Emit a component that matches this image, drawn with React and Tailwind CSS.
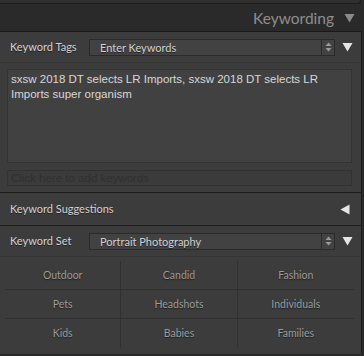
import React from "react";

const Spinner = () => (
  <div className="w-[13px] h-full border-l border-[#2a2a2a] flex items-center justify-center">
    <svg width="7" height="10" viewBox="0 0 7 10">
      <path d="M3.5 0.5 L6.5 4 H0.5 Z" fill="#9a9a9a" />
      <path d="M3.5 9.5 L6.5 6 H0.5 Z" fill="#9a9a9a" />
    </svg>
  </div>
);

const DownTri = ({ color = "#e6e6e6" }) => (
  <svg width="11" height="10" viewBox="0 0 11 10">
    <path d="M0.5 1 H10.5 L5.5 9.5 Z" fill={color} />
  </svg>
);

const Dropdown = ({ text }) => (
  <div className="w-[246px] h-[17px] bg-[#424242] border border-[#2a2a2a] flex items-stretch">
    <div className="flex-1 pl-[10px] flex items-center text-[11px] text-[#d2d2d2] leading-none pt-[1px] [text-shadow:0_1px_0_#222]">
      {text}
    </div>
    <Spinner />
  </div>
);

const cells = [
  "Outdoor", "Candid", "Fashion",
  "Pets", "Headshots", "Individuals",
  "Kids", "Babies", "Families",
];

export default function App() {
  return (
    <div className="w-[364px] h-[356px] bg-[#292929] overflow-hidden font-['Lato','Open_Sans',sans-serif]">
      <div className="h-[4px] w-[361px] bg-[#303030] border-r border-b border-[#1c1c1c] rounded-br-[3px]" />
      <div className="h-[27px] flex items-center justify-end pr-[9px] bg-[#2a2a2a]">
        <span className="text-[15.5px] text-[#8e8e8e] leading-none mr-[10px] mt-[2px]">Keywording</span>
        <DownTri color="#8a8a8a" />
      </div>
      <div className="w-[362px] bg-[#3c3c3c] border-t border-r border-[#1a1a1a]">
        {/* Keyword Tags row */}
        <div className="h-[31px] flex items-center pl-[10px] border-b border-[#353535]">
          <span className="w-[79px] text-[11px] text-[#d4d4d4] pt-[1px] [text-shadow:0_1px_0_#222]">Keyword Tags</span>
          <Dropdown text="Enter Keywords" />
          <div className="ml-[7px]"><DownTri /></div>
        </div>
        <div className="pt-[6px] pb-[6px] pl-[7px] pr-[9px] border-b border-[#1c1c1c]">
          <div className="h-[94px] bg-[#414141] border border-[#333333] px-[3px] pt-[2px] text-[11.5px] leading-[15px] text-[#d8d8d8] font-['Liberation_Sans',sans-serif]">
            sxsw 2018 DT selects LR Imports, sxsw 2018 DT selects LR Imports super organism
          </div>
          <div className="mt-[7px] h-[16px] bg-[#3b3b3b] border border-[#323232] px-[3px] text-[11.5px] leading-[14px] text-[#303030] font-['Liberation_Sans',sans-serif]">
            Click here to add keywords
          </div>
        </div>
        {/* Keyword Suggestions */}
        <div className="h-[33px] flex items-center pl-[10px] pr-[11px] justify-between border-b border-[#1c1c1c]">
          <span className="text-[11px] text-[#d4d4d4] pt-[1px] [text-shadow:0_1px_0_#222]">Keyword Suggestions</span>
          <svg width="10" height="11" viewBox="0 0 10 11">
            <path d="M9.5 0.5 V10.5 L0.5 5.5 Z" fill="#e6e6e6" />
          </svg>
        </div>
        {/* Keyword Set */}
        <div className="h-[31px] flex items-center pl-[10px] border-b border-[#353535]">
          <span className="w-[79px] text-[11px] text-[#d4d4d4] pt-[1px] [text-shadow:0_1px_0_#222]">Keyword Set</span>
          <Dropdown text="Portrait Photography" />
          <div className="ml-[7px]"><DownTri /></div>
        </div>
        <div className="pt-[4px] pb-[6px] pl-[5px] pr-[7px]">
          <div className="grid grid-cols-3">
            {cells.map((c, i) => {
              const col = i % 3;
              const row = Math.floor(i / 3);
              const cls =
                "h-[29px] flex items-center justify-center pt-[1px] text-[10.5px] text-[#9c9c9c] [text-shadow:0_1px_1px_#1e1e1e] " +
                (col < 2 ? "border-r border-[#303030] " : "") +
                (row < 2 ? "border-b border-[#303030]" : "");
              return (
                <div key={c} className={cls}>
                  {c}
                </div>
              );
            })}
          </div>
        </div>
      </div>
    </div>
  );
}
